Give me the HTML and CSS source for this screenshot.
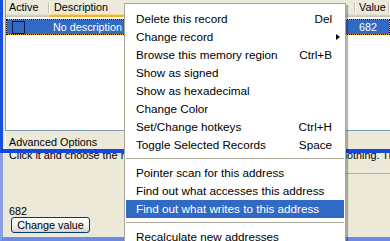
FILE: index.html
```html
<!DOCTYPE html>
<html lang="en">
<head>
  <meta charset="UTF-8">
  <title>Memory records</title>
  <link rel="stylesheet" href="styles.css">
</head>
<body>
  <div class="screen">
    <div class="main-win">
      <div class="list">
        <div class="list-head">
          <div class="hcol col-active">Active</div>
          <div class="hcol col-desc hot">Description</div>
          <div class="hcol col-addr">Address</div>
          <div class="hcol col-type">Type</div>
          <div class="hcol col-value">Value</div>
        </div>
        <div class="list-row selected">
          <div class="cell col-active first"><span class="check"></span></div>
          <div class="cell col-desc">No description</div>
          <div class="cell col-addr"></div>
          <div class="cell col-type"></div>
          <div class="cell col-value">682</div>
        </div>
      </div>
      <div class="adv">Advanced Options</div>
    </div>

    <div class="sub-win">
      <div class="hint">
        <span class="hint-left">Click it and choose the record you want to change, or click the list to do </span>
        <span class="hint-right">nothing. The value will stay</span>
      </div>
      <div class="hint-rule"></div>
      <div class="value-box">
        <div class="cur-value">682</div>
        <button class="btn">Change value</button>
      </div>
    </div>

    <!-- context menu on top of the record list -->
    <div class="popup">
      <div class="item"><span class="label">Delete this record</span><span class="key">Del</span><span class="sub"></span></div>
      <div class="item"><span class="label">Change record</span><span class="key"></span><span class="sub"><i class="arrow"></i></span></div>
      <div class="item"><span class="label">Browse this memory region</span><span class="key">Ctrl+B</span><span class="sub"></span></div>
      <div class="item"><span class="label">Show as signed</span><span class="key"></span><span class="sub"></span></div>
      <div class="item"><span class="label">Show as hexadecimal</span><span class="key"></span><span class="sub"></span></div>
      <div class="item"><span class="label">Change Color</span><span class="key"></span><span class="sub"></span></div>
      <div class="item"><span class="label">Set/Change hotkeys</span><span class="key">Ctrl+H</span><span class="sub"></span></div>
      <div class="item"><span class="label">Toggle Selected Records</span><span class="key">Space</span><span class="sub"></span></div>
      <div class="sep"></div>
      <div class="item"><span class="label">Pointer scan for this address</span><span class="key"></span><span class="sub"></span></div>
      <div class="item"><span class="label">Find out what accesses this address</span><span class="key"></span><span class="sub"></span></div>
      <div class="item active"><span class="label">Find out what writes to this address</span><span class="key"></span><span class="sub"></span></div>
      <div class="sep"></div>
      <div class="item"><span class="label">Recalculate new addresses</span><span class="key"></span><span class="sub"></span></div>
    </div>
  </div>
</body>
</html>
```

FILE: styles.css
```css
body {
  margin: 0;
  background: #ECE9D8;
  font-family: "Liberation Sans", Arial, sans-serif;
  font-size: 10.8px;
  color: #000;
}
.screen {
  position: relative;
  width: 390px;
  height: 241px;
  overflow: hidden;
}

/* upper window with the record list */
.main-win {
  height: 153px;
  box-sizing: border-box;
  border-left: 3px solid #1A4EDD;
  border-bottom: 4px solid #1547DC;
  padding-left: 2px;
  display: flex;
  flex-direction: column;
}
.list {
  height: 131px;
  box-sizing: border-box;
  background: #fff;
  border-left: 1px solid #7F9DB9;
  border-bottom: 1px solid #7F9DB9;
}
.list-head {
  display: flex;
  height: 17px;
  line-height: 14px;
}
.hcol {
  box-sizing: border-box;
  padding-left: 4px;
  white-space: nowrap;
  overflow: hidden;
  background:
    linear-gradient(#C7C5B2, #C7C5B2) right 1px top 2px / 1px 11px no-repeat,
    linear-gradient(#fff, #fff) right 0 top 2px / 1px 11px no-repeat,
    linear-gradient(#EBEADB 0 14px, #E2DECD 14px 15px, #D6D2C2 15px 16px, #CBC7B8 16px 17px);
}
.hcol.hot {
  background:
    linear-gradient(#C7C5B2, #C7C5B2) right 1px top 2px / 1px 11px no-repeat,
    linear-gradient(#fff, #fff) right 0 top 2px / 1px 11px no-repeat,
    linear-gradient(#EBEADB 0 14px, #FCD58A 14px 15px, #F8B030 15px 17px);
}
.col-active { width: 44px; flex: none; }
.col-desc { width: 160px; flex: none; }
.col-addr { width: 86px; flex: none; }
.col-type { width: 60px; flex: none; }
.col-value { flex: 1; }
.hcol.col-active { padding-left: 3px; }
.hcol.col-value { padding-left: 3px; }

.list-row {
  display: flex;
  margin-top: 2px;
  height: 16px;
  box-sizing: border-box;
  line-height: 14px;
  color: #fff;
}
.list-row.selected {
  border: 1px dotted #000;
  background: linear-gradient(#316AC5, #316AC5) padding-box, #F2A83C border-box;
}
.cell {
  box-sizing: border-box;
  padding-left: 3px;
  white-space: nowrap;
  overflow: hidden;
}
.cell.first {
  width: 43px;
  padding-left: 5px;
  padding-top: 1px;
}
.check {
  display: block;
  width: 13px;
  height: 13px;
  box-sizing: border-box;
  border: 1px solid #0B1A3C;
  background: #3169C6;
}
.adv {
  height: 18px;
  box-sizing: border-box;
  padding: 3px 0 0 4px;
  line-height: 16px;
  box-shadow: inset 1px 0 #fff;
}

/* lower window */
.sub-win {
  height: 88px;
  box-sizing: border-box;
  border-left: 3px solid #8C9EE2;
  border-bottom: 4px solid #6E8BE3;
  display: flex;
  flex-direction: column;
}
.hint {
  height: 20px;
  overflow: hidden;
  display: flex;
  white-space: nowrap;
  padding-left: 6px;
}
.hint span {
  display: block;
  margin-top: -7px;
  line-height: 18px;
}
.hint-left {
  flex: 0 0 332px;
  overflow: hidden;
}
.hint-rule {
  height: 1px;
  margin-left: 121px;
  background: #9DAFD0;
}
.value-box {
  margin-top: auto;
  padding: 0 0 4px 6px;
}
.cur-value {
  line-height: 12px;
}
.btn {
  display: block;
  margin-left: 2px;
  height: 16px;
  width: 79px;
  padding: 0;
  font: inherit;
  line-height: 14px;
  color: #000;
  border: 1px solid #003C74;
  border-radius: 3px;
  background: linear-gradient(#FFFFFF, #F0F0EA 60%, #D8D2C6);
}

/* popup menu */
.popup {
  position: absolute;
  left: 124px;
  top: 3px;
  width: 222px;
  box-sizing: border-box;
  padding-top: 6px;
  background: #fff;
  border: 1px solid #ACA899;
  box-shadow: 2px 2px 1px rgba(0, 0, 0, 0.28);
  font-size: 11.7px;
}
.item {
  display: flex;
  height: 18px;
  line-height: 18px;
  margin: 0 1px;
  padding-left: 10px;
  white-space: nowrap;
}
.item .label { flex: 1; }
.item .key { text-align: right; }
.item .sub {
  width: 12px;
  flex: none;
  display: flex;
  align-items: center;
}
.arrow {
  display: block;
  margin-left: 4px;
  border-left: 4px solid #000;
  border-top: 3.5px solid transparent;
  border-bottom: 3.5px solid transparent;
}
.item.active {
  background: #316AC5;
  color: #fff;
}
.sep {
  height: 1px;
  margin: 4px 1px 5px;
  background: #ACA899;
}
```
